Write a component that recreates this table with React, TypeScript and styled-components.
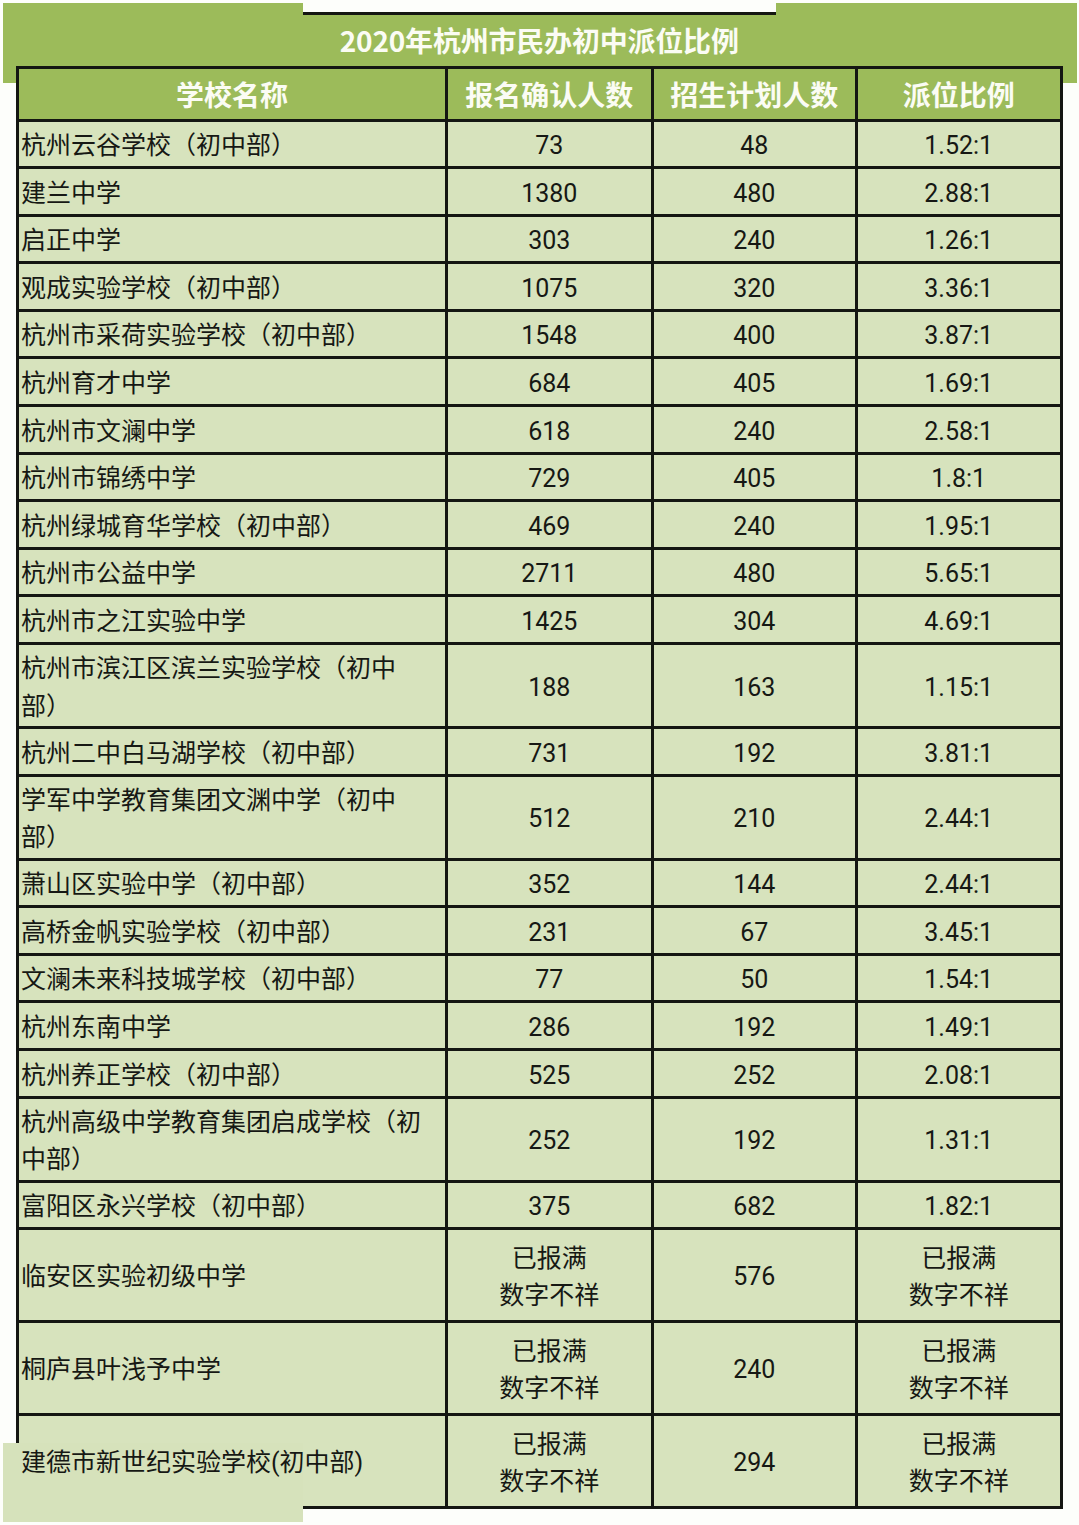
import type { FC } from "react";
import styled, { createGlobalStyle } from "styled-components";

const STACKED = "已报满\n数字不祥";

// 学校名称 / 报名确认人数 / 招生计划人数 / 派位比例
const schools: [string, string, string, string][] = [
  ["杭州云谷学校（初中部）", "73", "48", "1.52:1"],
  ["建兰中学", "1380", "480", "2.88:1"],
  ["启正中学", "303", "240", "1.26:1"],
  ["观成实验学校（初中部）", "1075", "320", "3.36:1"],
  ["杭州市采荷实验学校（初中部）", "1548", "400", "3.87:1"],
  ["杭州育才中学", "684", "405", "1.69:1"],
  ["杭州市文澜中学", "618", "240", "2.58:1"],
  ["杭州市锦绣中学", "729", "405", "1.8:1"],
  ["杭州绿城育华学校（初中部）", "469", "240", "1.95:1"],
  ["杭州市公益中学", "2711", "480", "5.65:1"],
  ["杭州市之江实验中学", "1425", "304", "4.69:1"],
  ["杭州市滨江区滨兰实验学校（初中\n部）", "188", "163", "1.15:1"],
  ["杭州二中白马湖学校（初中部）", "731", "192", "3.81:1"],
  ["学军中学教育集团文渊中学（初中\n部）", "512", "210", "2.44:1"],
  ["萧山区实验中学（初中部）", "352", "144", "2.44:1"],
  ["高桥金帆实验学校（初中部）", "231", "67", "3.45:1"],
  ["文澜未来科技城学校（初中部）", "77", "50", "1.54:1"],
  ["杭州东南中学", "286", "192", "1.49:1"],
  ["杭州养正学校（初中部）", "525", "252", "2.08:1"],
  ["杭州高级中学教育集团启成学校（初\n中部）", "252", "192", "1.31:1"],
  ["富阳区永兴学校（初中部）", "375", "682", "1.82:1"],
  ["临安区实验初级中学", STACKED, "576", STACKED],
  ["桐庐县叶浅予中学", STACKED, "240", STACKED],
  ["建德市新世纪实验学校(初中部)", STACKED, "294", STACKED],
];

const rowHeight = (cells: string[]): number => {
  if (cells.some((c) => c === STACKED)) return 90;
  if (cells[0].includes("\n")) return 81;
  return 44.6;
};

const App: FC = () => (
  <>
    <GlobalStyle />
    <Sheet>
      <Patch $left={3} $top={3} $width={300} $height={80} $color="#9cbb5a" $z={-1} />
      <Patch $left={776} $top={3} $width={301} $height={80} $color="#9cbb5a" $z={-1} />
      <Patch $left={3} $top={1443} $width={300} $height={79} $color="#d6e2bb" $z={1} />
      <Table>
        <TitleRow>2020年杭州市民办初中派位比例</TitleRow>
        <HeadRow>
          <HeadCell>学校名称</HeadCell>
          <HeadCell>报名确认人数</HeadCell>
          <HeadCell>招生计划人数</HeadCell>
          <HeadCell>派位比例</HeadCell>
        </HeadRow>
        {schools.map((cells) => (
          <Row key={cells[0]} $height={rowHeight(cells)}>
            <NameCell>
              <CellText>{cells[0]}</CellText>
            </NameCell>
            <NumCell>
              <CellText>{cells[1]}</CellText>
            </NumCell>
            <NumCell>
              <CellText>{cells[2]}</CellText>
            </NumCell>
            <NumCell>
              <CellText>{cells[3]}</CellText>
            </NumCell>
          </Row>
        ))}
      </Table>
    </Sheet>
  </>
);

const GlobalStyle = createGlobalStyle`
  body {
    margin: 0;
    background: #ffffff;
  }
`;

const Sheet = styled.div`
  position: relative;
  isolation: isolate;
  width: 1079px;
  min-height: 1525px;
  padding: 12px 0 0 16px;
  box-sizing: border-box;
  background: #fdfefb;
  font-family: Roboto, "Noto Sans CJK SC", sans-serif;
`;

/* 写真のずれで出来た色の帯 */
const Patch = styled.div<{
  $left: number;
  $top: number;
  $width: number;
  $height: number;
  $color: string;
  $z: number;
}>`
  position: absolute;
  left: ${(p) => p.$left}px;
  top: ${(p) => p.$top}px;
  width: ${(p) => p.$width}px;
  height: ${(p) => p.$height}px;
  background: ${(p) => p.$color};
  z-index: ${(p) => p.$z};
`;

const COLUMNS = "426px 202.5px 201.5px 201.5px";

const Table = styled.div`
  display: flex;
  flex-direction: column;
  gap: 3px;
  width: 1046.5px;
  padding: 0 3px 3px;
  box-sizing: border-box;
  background: #141612;
`;

const TitleRow = styled.div`
  position: relative;
  height: 53.5px;
  margin: 0 -3px;
  padding-top: 3px;
  box-sizing: border-box;
  display: flex;
  align-items: center;
  justify-content: center;
  background: #9cbb5a;
  color: #fbfcf4;
  font-family: "Noto Sans CJK SC", sans-serif;
  font-weight: 700;
  font-size: 28px;
  letter-spacing: -0.2px;

  &::before {
    content: "";
    position: absolute;
    left: 287px;
    width: 473px;
    top: 0;
    height: 3px;
    background: #141612;
  }
`;

const HeadRow = styled.div`
  display: grid;
  grid-template-columns: ${COLUMNS};
  gap: 3px;
  height: 50px;
`;

const HeadCell = styled.div`
  display: flex;
  align-items: center;
  justify-content: center;
  background: #9cbb5a;
  color: #fbfcf4;
  font-family: "Noto Sans CJK SC", sans-serif;
  font-weight: 700;
  font-size: 28px;
`;

const Row = styled.div<{ $height: number }>`
  display: grid;
  grid-template-columns: ${COLUMNS};
  gap: 3px;
  height: ${(p) => p.$height}px;
`;

const NameCell = styled.div`
  display: flex;
  align-items: center;
  padding: 4px 0 0 2px;
  background: #d7e3bd;
`;

const NumCell = styled.div`
  display: flex;
  align-items: center;
  justify-content: center;
  padding-top: 4px;
  text-align: center;
  background: #d7e3bd;
`;

const CellText = styled.span`
  position: relative;
  z-index: 2;
  white-space: pre-line;
  color: #161814;
  font-size: 25px;
  line-height: 37.5px;
`;

export default App;
